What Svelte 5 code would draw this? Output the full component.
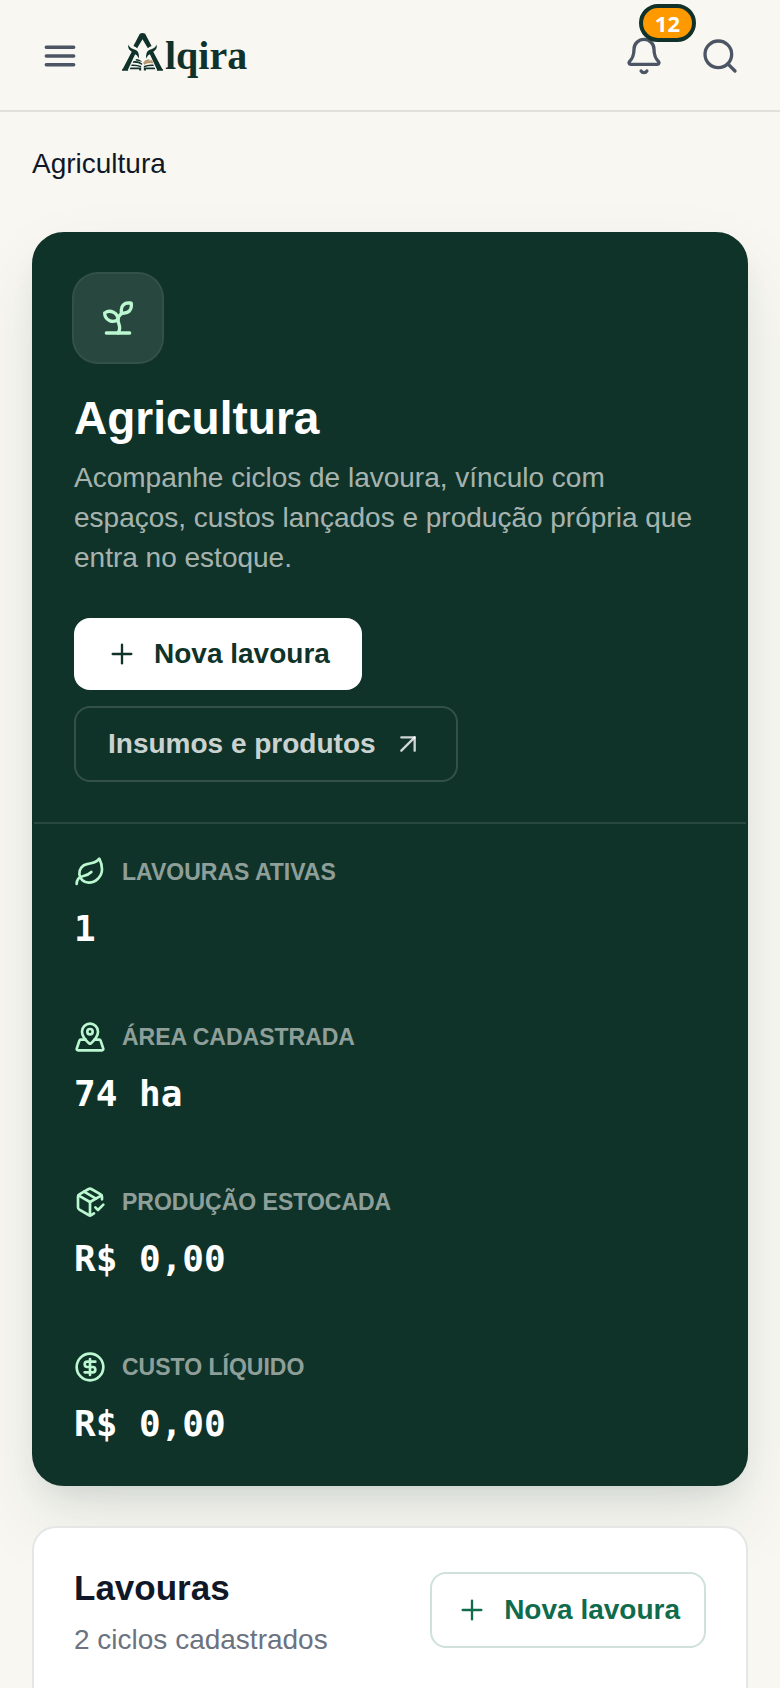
<script lang="ts">
    const notifications = 12;

    const icons = {
        sprout: [
            "M14 9.536V7a4 4 0 0 1 4-4h1.5a.5.5 0 0 1 .5.5V5a4 4 0 0 1-4 4 4 4 0 0 0-4 4c0 2 1 3 1 5a5 5 0 0 1-1 3",
            "M4 9a5 5 0 0 1 8 4 5 5 0 0 1-8-4",
            "M5 21h14",
        ],
        menu: ["M3.75 6.75h16.5M3.75 12h16.5M3.75 17.25h16.5"],
        bell: [
            "M10.268 21a2 2 0 0 0 3.464 0",
            "M3.262 15.326A1 1 0 0 0 4 17h16a1 1 0 0 0 .74-1.673C19.41 13.956 18 12.499 18 8A6 6 0 0 0 6 8c0 4.499-1.411 5.956-2.738 7.326",
        ],
        search: ["M3 11a8 8 0 1 0 16 0a8 8 0 1 0-16 0", "m21 21-4.3-4.3"],
        plus: ["M5 12h14", "M12 5v14"],
        arrow: ["M7 7h10v10", "M7 17 17 7"],
        leaf: [
            "M11 20A7 7 0 0 1 9.8 6.1C15.5 5 17 4.48 19 2c1 2 2 4.18 2 8 0 5.5-4.78 10-10 10Z",
            "M2 21c0-3 1.85-5.36 5.08-6C9.5 14.52 12 13 13 12",
        ],
        map: [
            "M18 8c0 3.613-3.869 7.429-5.393 8.795a1 1 0 0 1-1.214 0C9.87 15.429 6 11.613 6 8a6 6 0 0 1 12 0",
            "M10 8a2 2 0 1 0 4 0a2 2 0 1 0-4 0",
            "M8.714 14h-3.71a1 1 0 0 0-.948.683l-2.004 6A1 1 0 0 0 3 22h18a1 1 0 0 0 .948-1.316l-2-6a1 1 0 0 0-.949-.684h-3.712",
        ],
        box: [
            "m16 16 2 2 4-4",
            "M21 10V8a2 2 0 0 0-1-1.73l-7-4a2 2 0 0 0-2 0l-7 4A2 2 0 0 0 3 8v8a2 2 0 0 0 1 1.73l7 4a2 2 0 0 0 2 0l2-1.14",
            "m7.5 4.27 9 5.15",
            "M3.29 7 12 12l8.71-5",
            "M12 22V12",
        ],
        dollar: [
            "M2 12a10 10 0 1 0 20 0a10 10 0 1 0-20 0",
            "M16 8h-6a2 2 0 1 0 0 4h4a2 2 0 1 1 0 4H8",
            "M12 18V6",
        ],
    };

    const stats = [
        { icon: icons.leaf, label: "Lavouras ativas", value: "1" },
        { icon: icons.map, label: "Área cadastrada", value: "74 ha" },
        { icon: icons.box, label: "Produção estocada", value: "R$ 0,00" },
        { icon: icons.dollar, label: "Custo líquido", value: "R$ 0,00" },
    ];
</script>

{#snippet icon(paths: string[], size = 32, stroke = 2)}
    <svg
        width={size}
        height={size}
        viewBox="0 0 24 24"
        fill="none"
        stroke="currentColor"
        stroke-width={stroke}
        stroke-linecap="round"
        stroke-linejoin="round"
        aria-hidden="true"
    >
        {#each paths as d}
            <path {d} />
        {/each}
    </svg>
{/snippet}

<header class="topbar">
    <button class="icon-btn" aria-label="Abrir menu">
        {@render icon(icons.menu, 40)}
    </button>
    <a class="brand" href="/" aria-label="Alqira">
        <svg class="mark" viewBox="0 0 122 112" aria-hidden="true">
            <g fill="#10322a">
                <path d="M53 2Q61-3 69 2L88 38Q81 40 77 45L61 18L45 45Q41 40 34 38Z" />
                <path d="M19 34Q22 44 33 47Q46 50 49 60Q51 66 50 75Q45 65 39 63L18 108V112H0V108L3 105L29 55Q16 49 19 34Z" />
                <path d="M103 34Q100 44 89 47Q76 50 73 60Q71 66 72 75Q77 65 83 63L104 108V112H122V108L119 105L93 55Q106 49 103 34Z" />
                <path d="M34 83Q50 81 60 90V95Q46 86 32 88Z" />
                <path d="M41 77Q53 77 60 86Q50 81 41 81Z" />
                <path d="M29 93Q46 92 57 98V102Q43 97 27 98Z" />
                <path d="M25 102H57V111H51V107H23Z" />
                <path d="M93 93Q76 92 65 98V102Q79 97 95 98Z" />
                <path d="M97 102H65V111H71V107H99Z" />
            </g>
            <path d="M63 87Q72 76 83 78L81 82L90 80L93 90Q78 86 66 94Z" fill="#b99a72" />
        </svg>
        <span>lqira</span>
    </a>
    <div class="actions">
        <button class="icon-btn" aria-label="Notificações">
            {@render icon(icons.bell, 40)}
            <span class="badge">{notifications}</span>
        </button>
        <button class="icon-btn" aria-label="Buscar">
            {@render icon(icons.search, 40)}
        </button>
    </div>
</header>

<main>
    <nav class="breadcrumb" aria-label="Trilha">Agricultura</nav>

    <section class="hero">
        <div class="intro">
            <div class="hero-icon">{@render icon(icons.sprout, 40)}</div>
            <h1>Agricultura</h1>
            <p>
                Acompanhe ciclos de lavoura, vínculo com espaços, custos
                lançados e produção própria que entra no estoque.
            </p>
            <div class="buttons">
                <button class="btn primary">
                    {@render icon(icons.plus, 32, 1.75)}
                    Nova lavoura
                </button>
                <a class="btn ghost" href="/insumos">
                    Insumos e produtos
                    {@render icon(icons.arrow, 32, 1.75)}
                </a>
            </div>
        </div>
        <dl class="stats">
            {#each stats as stat}
                <div class="stat">
                    <dt>{@render icon(stat.icon)}{stat.label}</dt>
                    <dd>{stat.value}</dd>
                </div>
            {/each}
        </dl>
    </section>

    <section class="panel">
        <div>
            <h2>Lavouras</h2>
            <p>2 ciclos cadastrados</p>
        </div>
        <button class="btn outline">
            {@render icon(icons.plus, 32, 1.75)}
            Nova lavoura
        </button>
    </section>
</main>

<style>
    :global(body) {
        margin: 0;
        background: #f8f7f2;
        color: #101828;
        font-family: "Liberation Sans", Arial, sans-serif;
        font-size: 28px;
        line-height: 40px;
    }

    svg {
        display: block;
        flex-shrink: 0;
    }

    h1,
    h2,
    p,
    dl,
    dd {
        margin: 0;
    }

    .topbar {
        display: flex;
        align-items: center;
        padding: 20px 24px 18px;
        border-bottom: 2px solid #e0e1dc;
    }

    .icon-btn {
        position: relative;
        display: flex;
        align-items: center;
        justify-content: center;
        width: 72px;
        height: 72px;
        padding: 0;
        border: 0;
        background: none;
        color: #4b5563;
        cursor: pointer;
    }

    .brand {
        display: flex;
        align-items: center;
        gap: 2px;
        margin-left: 26px;
        color: #10322a;
        font-family: "Liberation Serif", "Times New Roman", serif;
        font-size: 40px;
        font-weight: 700;
        text-decoration: none;
    }

    .mark {
        width: 41px;
        height: 38px;
        margin-bottom: 8px;
    }

    .actions {
        display: flex;
        gap: 4px;
        margin-left: auto;
    }

    .badge {
        position: absolute;
        top: -16px;
        right: -16px;
        box-sizing: border-box;
        min-width: 56px;
        padding: 0 12px;
        border: 4px solid #10322a;
        border-radius: 20px;
        background: #fe9a00;
        color: #fff;
        font-family: "Open Sans", sans-serif;
        font-size: 22px;
        font-weight: 700;
        line-height: 30px;
        text-align: center;
    }

    main {
        padding: 32px;
    }

    .breadcrumb {
        margin-bottom: 48px;
    }

    .hero {
        border: 2px solid #103329;
        border-radius: 32px;
        background: #103329;
        color: #fff;
        box-shadow:
            0 36px 80px rgba(16, 51, 41, 0.08),
            0 16px 32px -12px rgba(16, 51, 41, 0.14);
    }

    .intro {
        padding: 40px;
        border-bottom: 2px solid rgba(255, 255, 255, 0.1);
    }

    .hero-icon {
        display: flex;
        align-items: center;
        justify-content: center;
        width: 88px;
        height: 88px;
        border-radius: 24px;
        background: rgba(255, 255, 255, 0.1);
        box-shadow: 0 0 0 2px rgba(255, 255, 255, 0.15);
        color: #bbf7d0;
    }

    h1 {
        margin-top: 24px;
        font-size: 46px;
        line-height: 64px;
    }

    .intro p {
        margin-top: 8px;
        color: rgba(255, 255, 255, 0.65);
    }

    .buttons {
        display: flex;
        flex-wrap: wrap;
        gap: 16px;
        margin-top: 40px;
    }

    .btn {
        display: inline-flex;
        align-items: center;
        gap: 16px;
        padding: 16px 32px;
        border: 0;
        border-radius: 16px;
        background: none;
        font-family: inherit;
        font-size: 28px;
        font-weight: 700;
        line-height: 40px;
        text-decoration: none;
        white-space: nowrap;
        cursor: pointer;
    }

    .primary {
        background: #fff;
        color: #103329;
    }

    .ghost {
        border: 2px solid rgba(255, 255, 255, 0.15);
        color: rgba(255, 255, 255, 0.8);
    }

    .outline {
        padding: 16px 24px;
        border: 2px solid #cfe1da;
        color: #0f6b4b;
    }

    .stat {
        padding: 32px 40px;
    }

    dt {
        display: flex;
        align-items: center;
        gap: 16px;
        color: rgba(255, 255, 255, 0.55);
        font-size: 23px;
        font-weight: 700;
        line-height: 32px;
        text-transform: uppercase;
    }

    dt :global(svg) {
        color: #bbf7d0;
    }

    dd {
        margin-top: 16px;
        padding-bottom: 3px;
        font-family: "DejaVu Sans Mono", monospace;
        font-size: 36px;
        font-weight: 700;
        line-height: 50px;
    }

    .panel {
        display: flex;
        align-items: center;
        justify-content: space-between;
        margin-top: 40px;
        padding: 32px 40px;
        border: 2px solid #e5e7e6;
        border-bottom: 0;
        border-radius: 24px 24px 0 0;
        background: #fff;
    }

    h2 {
        font-size: 35px;
        line-height: 56px;
    }

    .panel p {
        margin-top: 4px;
        color: #6b7280;
    }
</style>
